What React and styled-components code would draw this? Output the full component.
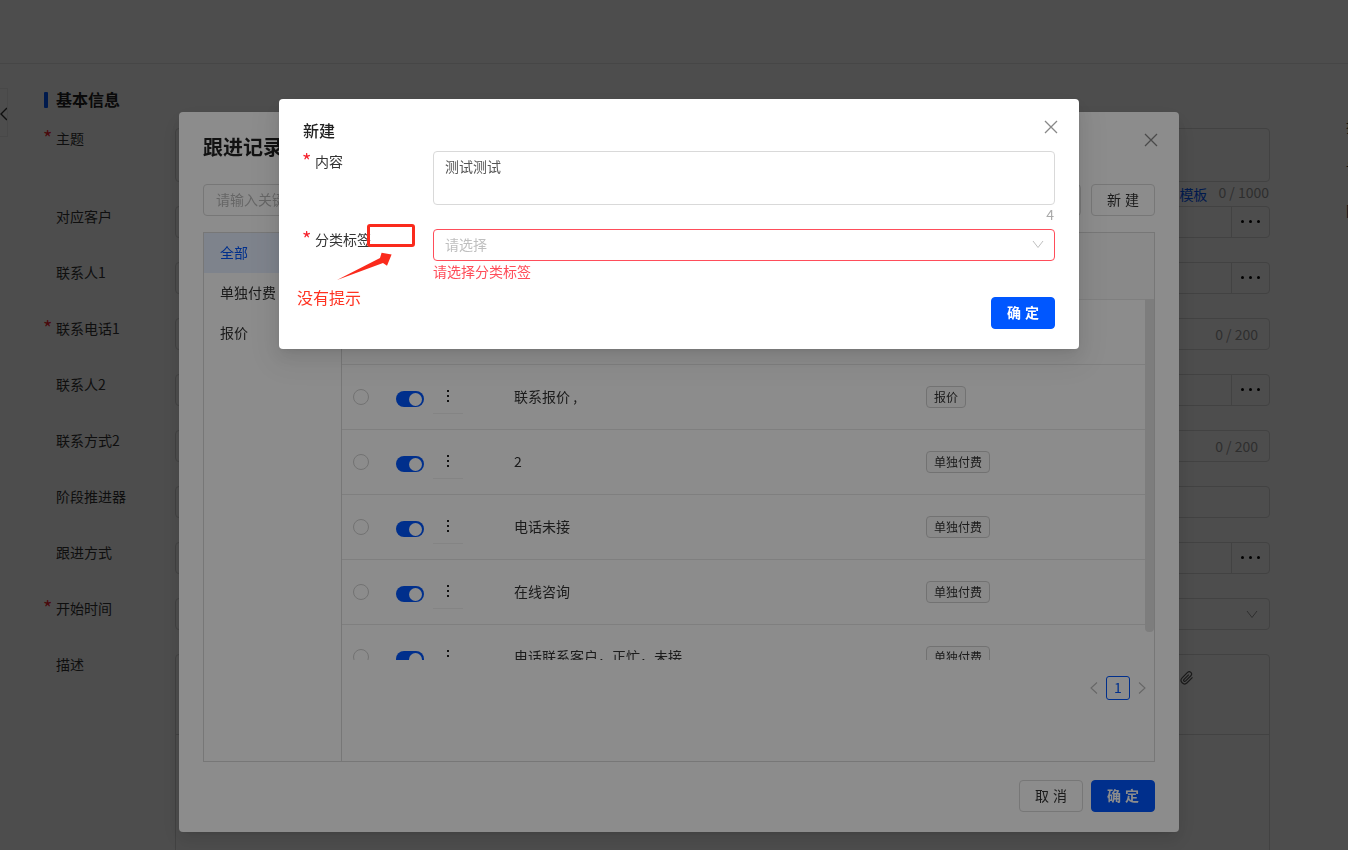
import React from "react";
import styled, { createGlobalStyle } from "styled-components";

const GlobalStyle = createGlobalStyle`
  html, body {
    margin: 0;
    height: 100%;
    overflow: hidden;
    background: #fff;
    font-family: "Noto Sans CJK SC", "Liberation Sans", sans-serif;
    font-size: 14px;
    color: #262626;
  }
  * { box-sizing: border-box; }
`;

const BLUE = "#0057ff";
const RED = "#ff4d5a";
const STAR = "#f5222d";
const MARK = "#fa2a1c";

const formRows = [
  { label: "对应客户", more: true },
  { label: "联系人1", more: true },
  { label: "联系电话1", required: true, count: "0 / 200" },
  { label: "联系人2", more: true },
  { label: "联系方式2", count: "0 / 200" },
  { label: "阶段推进器" },
  { label: "跟进方式", more: true },
  { label: "开始时间", required: true, chevron: true },
];

const records = [
  { text: "未接", tag: "单独付费" },
  { text: "联系报价 ,", tag: "报价" },
  { text: "2", tag: "单独付费" },
  { text: "电话未接", tag: "单独付费" },
  { text: "在线咨询", tag: "单独付费" },
  { text: "电话联系客户，正忙，未接", tag: "单独付费" },
];

const Page = styled.div`
  width: 1348px;
  height: 850px;
  overflow: hidden;
  background: #fff;
`;
const Header = styled.div`
  height: 64px;
  background: #fff;
  border-bottom: 1px solid #e8e8e8;
`;
const Body = styled.div`
  display: flex;
  align-items: flex-start;
  padding-top: 24px;
`;
const BackTab = styled.div`
  width: 8px;
  height: 49px;
  display: flex;
  align-items: center;
  justify-content: flex-start;
  padding-top: 2px;
  border: 1px solid #eee;
  border-left: none;
  overflow: hidden;
  flex: none;
`;
const FormArea = styled.div`
  width: 1261px;
  margin-left: 36px;
  flex: none;
`;
const SectionTitle = styled.div`
  display: flex;
  align-items: center;
  height: 24px;
  margin-bottom: 16px;
  padding-bottom: 2px;
  font-size: 16px;
  line-height: 22px;
  font-weight: 700;
  color: #222;
  &::before {
    content: "";
    width: 4px;
    height: 16px;
    margin: 2px 8px 0 0;
    border-radius: 1px;
    background: ${BLUE};
  }
`;
const FormRow = styled.div`
  display: flex;
  height: ${(p) => p.$height || 56}px;
  padding-left: 12px;
`;
const Label = styled.div`
  position: relative;
  width: 119px;
  flex: none;
  line-height: 21px;
  color: #333;
  ${(p) =>
    p.$required &&
    `&::before {
      content: "*";
      position: absolute;
      left: -13px;
      top: -1px;
      font-size: 20px;
      line-height: 21px;
      color: ${STAR};
    }`}
`;
const FieldBox = styled.div`
  flex: none;
  width: 1095px;
  height: ${(p) => p.$height || 32}px;
  display: flex;
  align-items: center;
  justify-content: flex-end;
  border: 1px solid #d9d9d9;
  border-radius: 4px;
  color: #999;
`;
const MoreButton = styled.div`
  width: 38px;
  height: 100%;
  display: flex;
  align-items: center;
  justify-content: center;
  gap: 5px;
  padding-bottom: 2px;
  border-left: 1px solid #d9d9d9;
  i {
    width: 3px;
    height: 3px;
    border-radius: 50%;
    background: #000;
  }
`;
const FieldCount = styled.span`
  padding-right: 11px;
`;
const TextareaField = styled.div`
  flex: none;
  width: 1095px;
`;
const FieldHint = styled.div`
  display: flex;
  justify-content: flex-end;
  gap: 11px;
  height: 20px;
  padding-right: 1px;
  line-height: 20px;
  color: #999;
  a {
    padding-top: 2px;
    color: ${BLUE};
  }
`;
const EditorBox = styled.div`
  flex: none;
  width: 1095px;
  height: 300px;
  border: 1px solid #d9d9d9;
  border-radius: 4px;
`;
const EditorTools = styled.div`
  height: 80px;
  display: flex;
  justify-content: flex-end;
  padding: 16px 75px 0 0;
  border-bottom: 1px solid #d9d9d9;
`;
const SideColumn = styled.div`
  flex: none;
  width: 40px;
  margin-left: 41px;
  padding-top: 17px;
  line-height: 42px;
  color: #333;
`;

const Mask = styled.div`
  position: fixed;
  inset: 0;
  background: rgba(0, 0, 0, 0.45);
`;
const Modal = styled.div`
  position: fixed;
  left: ${(p) => p.$left}px;
  top: ${(p) => p.$top}px;
  width: ${(p) => p.$width}px;
  height: ${(p) => p.$height}px;
  background: #fff;
  border-radius: 4px;
  box-shadow: 0 3px 6px -4px rgba(0, 0, 0, 0.12), 0 6px 16px rgba(0, 0, 0, 0.08),
    0 9px 28px 8px rgba(0, 0, 0, 0.05);
`;
const CloseIcon = styled.svg`
  position: absolute;
  right: 21px;
  top: 21px;
  width: 14px;
  height: 14px;
  stroke: #888;
  stroke-width: 1.3;
  fill: none;
`;

const RecordsBody = styled.div`
  height: 100%;
  display: flex;
  flex-direction: column;
  padding: 24px 24px 20px;
`;
const RecordsTitle = styled.div`
  height: 48px;
  font-size: 20px;
  line-height: 22px;
  font-weight: 700;
  color: #222;
`;
const Toolbar = styled.div`
  display: flex;
  gap: 10px;
  height: 32px;
  margin-bottom: 16px;
`;
const SearchInput = styled.div`
  flex: 1;
  padding-left: 12px;
  line-height: 28px;
  border: 1px solid #d9d9d9;
  border-radius: 4px;
  color: #bbb;
`;
const Button = styled.div`
  width: 64px;
  height: 32px;
  display: flex;
  align-items: center;
  justify-content: center;
  padding: 0 0 2px 4px;
  letter-spacing: 4px;
  border-radius: 4px;
  border: 1px solid ${(p) => (p.$primary ? BLUE : "#d9d9d9")};
  background: ${(p) => (p.$primary ? BLUE : "#fff")};
  color: ${(p) => (p.$primary ? "#fff" : "#333")};
  font-weight: ${(p) => (p.$primary ? 700 : 400)};
`;
const RecordsPanel = styled.div`
  display: flex;
  height: 530px;
  flex: none;
  border: 1px solid #d9d9d9;
`;
const Categories = styled.div`
  width: 138px;
  flex: none;
  border-right: 1px solid #d9d9d9;
`;
const Category = styled.div`
  height: 40px;
  padding-left: 16px;
  line-height: 38px;
  color: ${(p) => (p.$active ? BLUE : "#333")};
  background: ${(p) => (p.$active ? "#e6eeff" : "transparent")};
`;
const TableArea = styled.div`
  flex: 1;
  min-width: 0;
  display: flex;
  flex-direction: column;
`;
const TableHead = styled.div`
  height: 66px;
  flex: none;
  background: #fafafa;
`;
const RowsViewport = styled.div`
  position: relative;
  height: 361px;
  flex: none;
  overflow: hidden;
`;
const RecordRow = styled.div`
  height: 65px;
  display: flex;
  align-items: center;
  padding-left: 11px;
  border-top: 1px solid #e8e8e8;
`;
const Radio = styled.div`
  width: 16px;
  height: 16px;
  flex: none;
  border: 1px solid #d0d0d0;
  border-radius: 50%;
`;
const Toggle = styled.div`
  width: 28px;
  height: 16px;
  flex: none;
  margin: 4px 0 0 27px;
  display: flex;
  align-items: center;
  justify-content: flex-end;
  padding-right: 2px;
  border-radius: 8px;
  background: ${BLUE};
  &::after {
    content: "";
    width: 13px;
    height: 13px;
    border-radius: 50%;
    background: #fff;
  }
`;
const Kebab = styled.div`
  width: 30px;
  height: 34px;
  flex: none;
  margin-left: 9px;
  padding-top: 10px;
  display: flex;
  flex-direction: column;
  align-items: center;
  gap: 3px;
  border-bottom: 1px solid #f0f0f0;
  i {
    width: 2px;
    height: 2px;
    background: #222;
  }
`;
const RowText = styled.div`
  width: 412px;
  flex: none;
  margin-left: 51px;
  padding-bottom: 2px;
  color: #333;
`;
const Tag = styled.div`
  height: 22px;
  padding: 0 7px;
  flex: none;
  font-size: 12px;
  line-height: 20px;
  border: 1px solid #d0d0d0;
  border-radius: 4px;
  background: #fafafa;
  color: #333;
`;
const ScrollThumb = styled.div`
  position: absolute;
  right: 0;
  top: 0;
  width: 9px;
  height: 333px;
  border-radius: 0 0 4px 4px;
  background: #e4e4e4;
`;
const Pagination = styled.div`
  display: flex;
  justify-content: flex-end;
  align-items: center;
  gap: 7px;
  margin-top: 16px;
  padding-right: 7px;
`;
const PageNumber = styled.div`
  width: 24px;
  height: 24px;
  text-align: center;
  line-height: 21px;
  border: 1px solid ${BLUE};
  border-radius: 3px;
  color: ${BLUE};
`;
const ModalFooter = styled.div`
  display: flex;
  justify-content: flex-end;
  gap: 8px;
  margin-top: 18px;
`;

const NewBody = styled.div`
  position: relative;
  height: 100%;
  padding: 20px 24px 0;
`;
const NewTitle = styled.div`
  height: 32px;
  font-size: 16px;
  line-height: 22px;
  font-weight: 500;
  color: #222;
`;
const NewRow = styled.div`
  display: flex;
  height: ${(p) => p.$height}px;
`;
const NewLabel = styled.div`
  position: relative;
  width: 130px;
  flex: none;
  padding-left: 12px;
  line-height: 20px;
  color: #333;
  &::before {
    content: "*";
    position: absolute;
    left: -1px;
    top: -1px;
    font-size: 20px;
    line-height: 21px;
    color: ${STAR};
  }
`;
const NewField = styled.div`
  flex: 1;
  min-width: 0;
`;
const TextArea = styled.div`
  height: 54px;
  padding: 4px 11px;
  line-height: 20px;
  border: 1px solid #d9d9d9;
  border-radius: 4px;
  color: #555;
`;
const CharCount = styled.div`
  height: 20px;
  padding-right: 1px;
  text-align: right;
  line-height: 18px;
  color: #aaa;
`;
const SelectBox = styled.div`
  height: 32px;
  display: flex;
  align-items: center;
  justify-content: space-between;
  padding: 0 10px 2px 11px;
  border: 1px solid ${RED};
  border-radius: 4px;
  color: #bfbfbf;
`;
const ErrorText = styled.div`
  line-height: 20px;
  color: ${RED};
`;
const NewFooter = styled.div`
  display: flex;
  justify-content: flex-end;
`;
const MarkBox = styled.div`
  position: absolute;
  left: 88px;
  top: 125px;
  width: 48px;
  height: 23px;
  border: 3px solid ${MARK};
  border-radius: 3px;
`;
const MarkArrow = styled.svg`
  position: absolute;
  left: 58px;
  top: 153px;
  width: 56px;
  height: 30px;
`;
const MarkText = styled.div`
  position: absolute;
  left: 18px;
  top: 186px;
  font-size: 16px;
  line-height: 24px;
  color: #ff3322;
`;

function Chevron({ color = "#999" }) {
  return (
    <svg width="12" height="12" viewBox="0 0 12 12" fill="none" stroke={color} strokeWidth="1">
      <path d="M1 3 6 9.500 11 3" />
    </svg>
  );
}

function PageArrow({ left }) {
  return (
    <svg width="10" height="14" viewBox="0 0 10 14" fill="none" stroke="#bbb" strokeWidth="1.100">
      <path d={left ? "M8 1.500 2 7l6 5.500" : "M2 1.500 8 7l-6 5.500"} />
    </svg>
  );
}

export default function App() {
  return (
    <>
      <GlobalStyle />
      <Page>
        <Header />
        <Body>
          <BackTab>
            <svg width="7" height="14" viewBox="0 0 7 14" fill="none" stroke="#333" strokeWidth="1.400" style={{ flex: "none" }}>
              <path d="M7 1 1 7l6 6" />
            </svg>
          </BackTab>
          <FormArea>
            <SectionTitle>基本信息</SectionTitle>
            <FormRow $height={78}>
              <Label $required>主题</Label>
              <TextareaField>
                <FieldBox $height={54} />
                <FieldHint>
                  <a>模板</a>
                  <span>0 / 1000</span>
                </FieldHint>
              </TextareaField>
            </FormRow>
            {formRows.map((row) => (
              <FormRow key={row.label}>
                <Label $required={row.required}>{row.label}</Label>
                <FieldBox>
                  {row.more && (
                    <MoreButton>
                      <i />
                      <i />
                      <i />
                    </MoreButton>
                  )}
                  {row.count && <FieldCount>{row.count}</FieldCount>}
                  {row.chevron && (
                    <FieldCount>
                      <Chevron />
                    </FieldCount>
                  )}
                </FieldBox>
              </FormRow>
            ))}
            <FormRow $height={300}>
              <Label>描述</Label>
              <EditorBox>
                <EditorTools>
                  <svg width="14" height="14" viewBox="0 0 24 24" fill="none" stroke="#555" strokeWidth="2">
                    <path d="m21.400 11-9.200 9.200a6 6 0 0 1-8.500-8.500l9.200-9.200a4 4 0 0 1 5.700 5.700l-9.200 9.200a2 2 0 0 1-2.800-2.800l8.500-8.500" />
                  </svg>
                </EditorTools>
              </EditorBox>
            </FormRow>
          </FormArea>
          <SideColumn>
            <div>操作</div>
            <div>记录</div>
            <div>附件</div>
          </SideColumn>
        </Body>

        <Mask />
        <Modal $left={179} $top={112} $width={1000} $height={720}>
          <CloseIcon viewBox="0 0 14 14">
            <path d="M1 1l12 12M13 1 1 13" />
          </CloseIcon>
          <RecordsBody>
            <RecordsTitle>跟进记录</RecordsTitle>
            <Toolbar>
              <SearchInput>请输入关键字</SearchInput>
              <Button>新建</Button>
            </Toolbar>
            <RecordsPanel>
              <Categories>
                <Category $active>全部</Category>
                <Category>单独付费</Category>
                <Category>报价</Category>
              </Categories>
              <TableArea>
                <TableHead />
                <RowsViewport>
                  {records.map((record) => (
                    <RecordRow key={record.text}>
                      <Radio />
                      <Toggle />
                      <Kebab>
                        <i />
                        <i />
                        <i />
                      </Kebab>
                      <RowText>{record.text}</RowText>
                      <Tag>{record.tag}</Tag>
                    </RecordRow>
                  ))}
                  <ScrollThumb />
                </RowsViewport>
                <Pagination>
                  <PageArrow left />
                  <PageNumber>1</PageNumber>
                  <PageArrow />
                </Pagination>
              </TableArea>
            </RecordsPanel>
            <ModalFooter>
              <Button>取消</Button>
              <Button $primary>确定</Button>
            </ModalFooter>
          </RecordsBody>
        </Modal>

        <Mask />
        <Modal $left={279} $top={99} $width={800} $height={250}>
          <CloseIcon viewBox="0 0 14 14">
            <path d="M1 1l12 12M13 1 1 13" />
          </CloseIcon>
          <NewBody>
            <NewTitle>新建</NewTitle>
            <NewRow $height={78}>
              <NewLabel>内容</NewLabel>
              <NewField>
                <TextArea>测试测试</TextArea>
                <CharCount>4</CharCount>
              </NewField>
            </NewRow>
            <NewRow $height={68}>
              <NewLabel>分类标签</NewLabel>
              <NewField>
                <SelectBox>
                  请选择
                  <Chevron color="#bfbfbf" />
                </SelectBox>
                <ErrorText>请选择分类标签</ErrorText>
              </NewField>
            </NewRow>
            <NewFooter>
              <Button $primary>确定</Button>
            </NewFooter>
            <MarkBox />
            <MarkArrow viewBox="0 0 56 30">
              <path d="M0 28 43 6 44.600.7 54.600 2.500 50 13.700 46 11Z" fill={MARK} />
            </MarkArrow>
            <MarkText>没有提示</MarkText>
          </NewBody>
        </Modal>
      </Page>
    </>
  );
}
